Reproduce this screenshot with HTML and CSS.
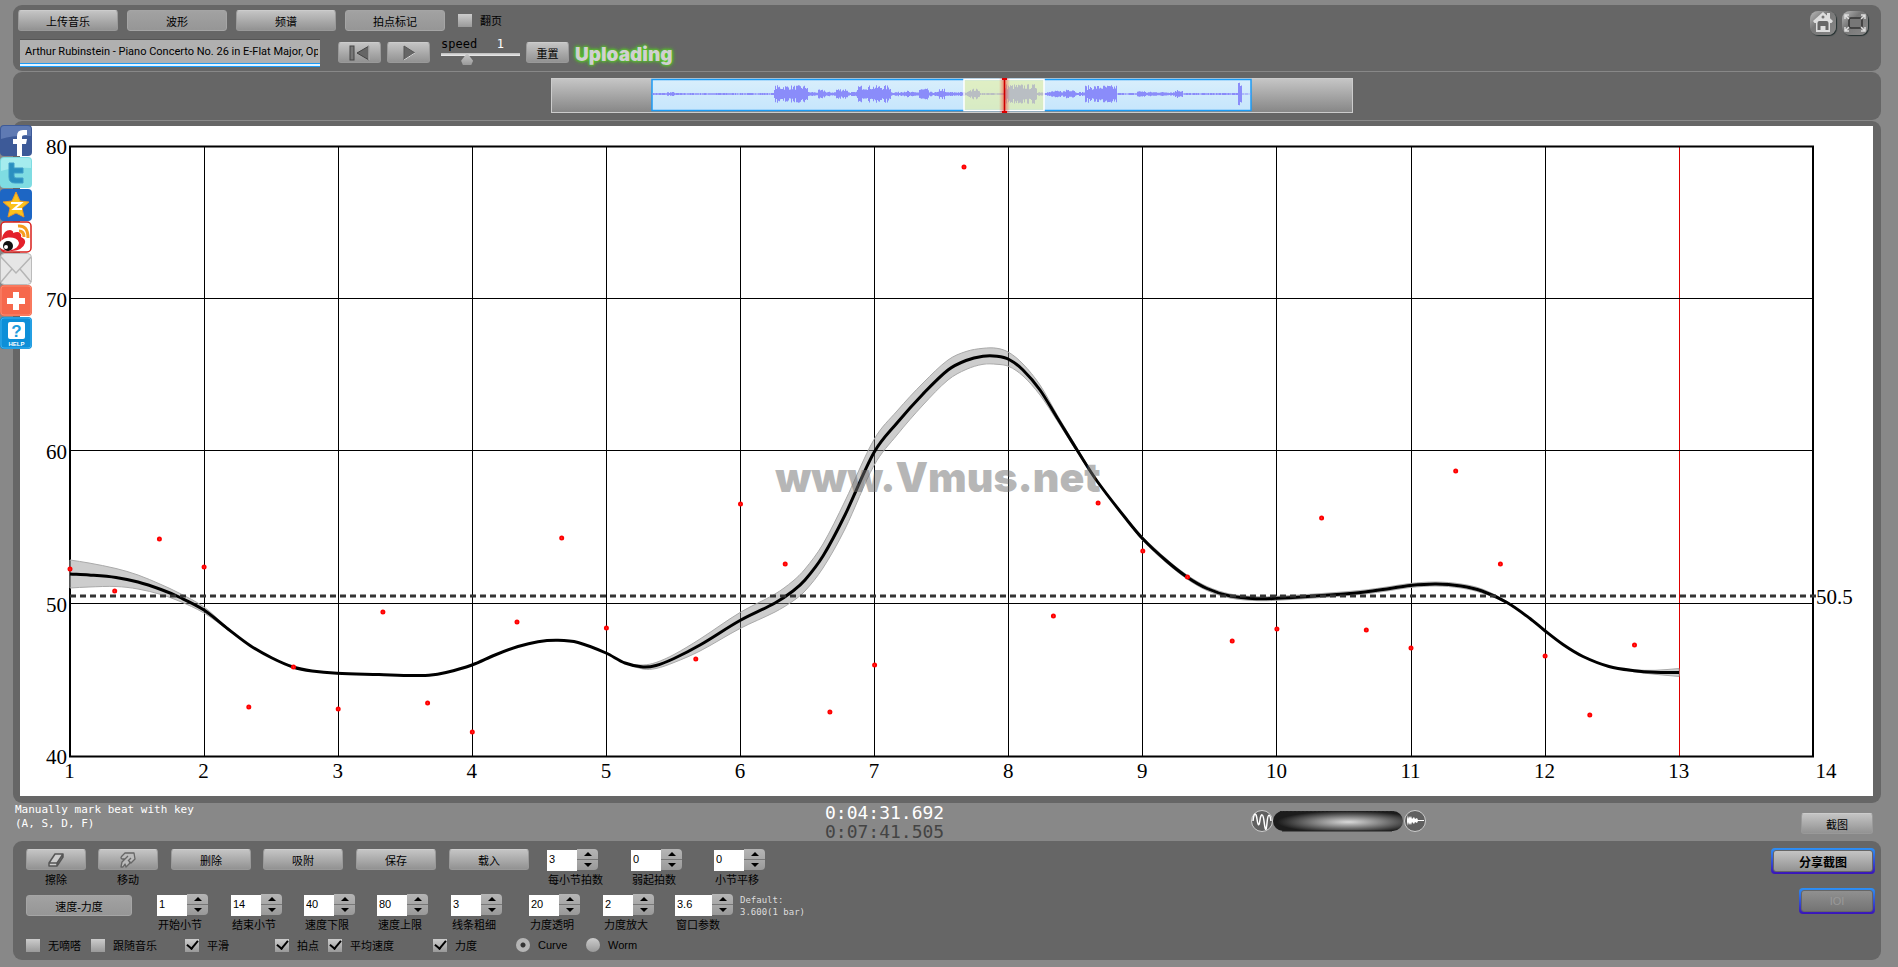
FILE: index.html
```
<!DOCTYPE html>
<html lang="zh">
<head>
    <meta charset="UTF-8">
    <meta name="viewport" content="width=device-width, initial-scale=1.0">
    <title>Vmus.net</title>
    <link rel="stylesheet" href="styles.css">
</head>
<body>
    <div class="app">
        <header class="panel toolbar">
            <div class="toolbar-main">
                <div class="toolbar-row">
                    <button class="btn btn-wide">上传音乐</button>
                    <button class="btn btn-wide pressed">波形</button>
                    <button class="btn btn-wide">频谱</button>
                    <button class="btn btn-wide pressed">拍点标记</button>
                    <label class="check page-turn"><input type="checkbox"><span>翻页</span></label>
                </div>
                <div class="toolbar-row">
                    <input class="track-name" type="text" aria-label="track" value="Arthur Rubinstein - Piano Concerto No. 26 in E-Flat Major, Op">
                    <div class="player">
                        <button class="btn btn-icon" aria-label="rewind">
                            <svg width="22" height="16" viewBox="0 0 22 16"><rect x="1" y="1" width="4" height="14" fill="#777" stroke="#444"/><path d="M20 1v14L8 8z" fill="#666" stroke="#444"/><path d="M20 1v14" stroke="#ddd"/></svg>
                        </button>
                        <button class="btn btn-icon" aria-label="play">
                            <svg width="16" height="16" viewBox="0 0 16 16"><path d="M3 1v14l11-7z" fill="#666" stroke="#555"/><path d="M3 15l11-7" stroke="#ddd"/></svg>
                        </button>
                        <div class="speed">
                            <div class="speed-text"><label for="speed">speed</label><output>1</output></div>
                            <input type="range" id="speed" min="0" max="3" step="0.1" value="0.9">
                        </div>
                        <button class="btn btn-reset">重置</button>
                        <span class="uploading">Uploading</span>
                    </div>
                </div>
            </div>
            <div class="window-buttons">
                <button class="round-btn" aria-label="home">
                    <svg width="26" height="24" viewBox="0 0 26 24"><path d="M13 1L3 10l1.500 2H6v9h14v-9h1.500L23 10l-3-2.700V2h-3v2.600z" fill="#ddd"/><path d="M7.500 19v-7q0-2 2-2h7q2 0 2 2v7h-3v-4h-5v4z" fill="#666"/><circle cx="13" cy="6" r="1.500" fill="#777"/></svg>
                </button>
                <button class="round-btn" aria-label="full screen">
                    <svg width="26" height="24" viewBox="0 0 26 24"><rect x="7" y="7" width="13" height="10" rx="2" fill="#777" stroke="#333" stroke-width="1.500"/><path d="M3 8V4h4M19 4h4v4M23 16v4h-4M7 20H3v-4M3 4l4 4M23 4l-4 4M23 20l-4-4M3 20l4-4" fill="none" stroke="#ddd" stroke-width="1.500"/></svg>
                </button>
            </div>
        </header>

        <section class="panel overview">
            <svg class="wave" viewBox="0 0 802 35">
                <defs>
                    <linearGradient id="waveBack" x1="0" y1="0" x2="0" y2="1"><stop offset="0" stop-color="#c6c6c6"/><stop offset="1" stop-color="#868686"/></linearGradient>
                    <linearGradient id="waveBlue" x1="0" y1="0" x2="0" y2="1"><stop offset="0" stop-color="#d8eefc"/><stop offset="1" stop-color="#c6e6fc"/></linearGradient>
                    <linearGradient id="cursorGlow"><stop offset="0" stop-color="#f00" stop-opacity="0"/><stop offset=".5" stop-color="#f00" stop-opacity=".45"/><stop offset="1" stop-color="#f00" stop-opacity="0"/></linearGradient>
                </defs>
                <rect x=".5" y=".5" width="801" height="34" fill="url(#waveBack)" stroke="#ccc"/>
                <rect x="101" y="1.500" width="599" height="31" fill="url(#waveBlue)" stroke="#1c9bf5" stroke-width="1.500"/>
                <path id="wavePath" fill="#8a8cfa"/>
                <rect x="413" y="1.500" width="80" height="31" fill="#e8f08c" fill-opacity=".5" stroke="#fff" stroke-width="1.500"/>
                <rect x="448" y="0" width="11" height="35" fill="url(#cursorGlow)"/>
                <path d="M453.500 0v35" stroke="#c00" stroke-width="1.500"/>
                <path d="M451 1h5M451 34h5" stroke="#d00" stroke-width="2"/>
            </svg>
        </section>

        <main class="panel chart-panel">
            <svg class="chart" viewBox="0 0 1853 670">
                <g id="grid"></g>
                <path id="band"/>
                <path id="curve"/>
                <path id="average" d="M50 470H1797"/>
                <g id="dots"></g>
                <g id="labels"></g>
                <text class="watermark" x="918" y="366">www.Vmus.net</text>
            </svg>
        </main>

        <div class="status">
            <p class="hint">Manually mark beat with key<br>(A, S, D, F)</p>
            <div class="time"><span>0:04:31.692</span><span class="total">0:07:41.505</span></div>
            <div class="status-right">
                <svg class="mixer" width="178" height="24" viewBox="0 0 178 24">
                    <defs>
                        <radialGradient id="knob" cx=".58" cy=".55" r=".55"><stop offset="0" stop-color="#dadada"/><stop offset=".45" stop-color="#868686"/><stop offset="1" stop-color="#1c1c1c"/></radialGradient>
                    </defs>
                    <circle cx="12" cy="12" r="10.500" fill="#606060" stroke="#ccc"/>
                    <path d="M3 12C4 3 6 3 7 10s2 8 3 1 3-7 4 1 2 13 3 2 3-9 4-2" fill="none" stroke="#fff" stroke-width="1.500"/>
                    <rect x="23" y="2" width="130" height="20" rx="10" fill="url(#knob)"/>
                    <path d="M30 2.500h115" stroke="#222" stroke-dasharray="2 2"/>
                    <path d="M32 22h110" stroke="#222"/>
                    <circle cx="165" cy="12" r="10.500" fill="#606060" stroke="#ccc"/>
                    <path d="M157 6l1 4 1-3 1 2 1-2 1 3 2-2 1 2 2-1 1 2h6v1h-6l-1 2-2-1-1 2-2-2-1 3-1-2-1 2-1-3-1 4z" fill="#fff"/>
                </svg>
                <button class="btn btn-shot">截图</button>
            </div>
        </div>

        <footer class="panel controls">
            <div class="control-rows">
                <div class="row row-edit">
                    <div class="tool">
                        <button class="btn" id="erase" aria-label="擦除"><svg width="18" height="16" viewBox="0 0 18 16"><path d="M2 11L8 2h8l-6 9zM2 11v3h8v-3M10 14l6-9V2" fill="#ccc" stroke="#555" stroke-width="1.500" stroke-linejoin="round"/></svg></button>
                        <label for="erase">擦除</label>
                    </div>
                    <div class="tool">
                        <button class="btn" id="move" aria-label="移动"><svg width="18" height="18" viewBox="0 0 18 18"><path d="M2 16l1-5 3-3H3Q1 7 3 5L6 2h9l1 6-4 4-2-2 1 2-4 4-1-3-2 3zM6 8l3-3M9 10l3-3" fill="#bbb" stroke="#666" stroke-width="1.300" stroke-linejoin="round"/></svg></button>
                        <label for="move">移动</label>
                    </div>
                    <button class="btn btn-edit">删除</button>
                    <button class="btn btn-edit">吸附</button>
                    <button class="btn btn-edit">保存</button>
                    <button class="btn btn-edit">载入</button>
                    <div class="step"><div class="spin"><input type="number" id="beats" value="3"><div class="arrows"><button aria-label="+"></button><button aria-label="-"></button></div></div><label for="beats">每小节拍数</label></div>
                    <div class="step"><div class="spin"><input type="number" id="pickup" value="0"><div class="arrows"><button aria-label="+"></button><button aria-label="-"></button></div></div><label for="pickup">弱起拍数</label></div>
                    <div class="step"><div class="spin"><input type="number" id="shift" value="0"><div class="arrows"><button aria-label="+"></button><button aria-label="-"></button></div></div><label for="shift">小节平移</label></div>
                </div>
                <div class="row row-view">
                    <button class="btn btn-mode pressed">速度-力度</button>
                    <div class="step"><div class="spin"><input type="number" id="barStart" value="1"><div class="arrows"><button aria-label="+"></button><button aria-label="-"></button></div></div><label for="barStart">开始小节</label></div>
                    <div class="step"><div class="spin"><input type="number" id="barEnd" value="14"><div class="arrows"><button aria-label="+"></button><button aria-label="-"></button></div></div><label for="barEnd">结束小节</label></div>
                    <div class="step"><div class="spin"><input type="number" id="tempoMin" value="40"><div class="arrows"><button aria-label="+"></button><button aria-label="-"></button></div></div><label for="tempoMin">速度下限</label></div>
                    <div class="step"><div class="spin"><input type="number" id="tempoMax" value="80"><div class="arrows"><button aria-label="+"></button><button aria-label="-"></button></div></div><label for="tempoMax">速度上限</label></div>
                    <div class="step"><div class="spin"><input type="number" id="lineWidth" value="3"><div class="arrows"><button aria-label="+"></button><button aria-label="-"></button></div></div><label for="lineWidth">线条粗细</label></div>
                    <div class="step"><div class="spin"><input type="number" id="alpha" value="20"><div class="arrows"><button aria-label="+"></button><button aria-label="-"></button></div></div><label for="alpha">力度透明</label></div>
                    <div class="step"><div class="spin"><input type="number" id="zoom" value="2"><div class="arrows"><button aria-label="+"></button><button aria-label="-"></button></div></div><label for="zoom">力度放大</label></div>
                    <div class="step step-long"><div class="spin"><input type="number" id="win" step="0.1" value="3.6"><div class="arrows"><button aria-label="+"></button><button aria-label="-"></button></div></div><label for="win">窗口参数</label></div>
                    <p class="default">Default:<br>3.600(1 bar)</p>
                </div>
                <div class="row row-options">
                    <label class="check"><input type="checkbox"><span>无嘀嗒</span></label>
                    <label class="check"><input type="checkbox"><span>跟随音乐</span></label>
                    <label class="check"><input type="checkbox" checked><span>平滑</span></label>
                    <label class="check"><input type="checkbox" checked><span>拍点</span></label>
                    <label class="check"><input type="checkbox" checked><span>平均速度</span></label>
                    <label class="check"><input type="checkbox" checked><span>力度</span></label>
                    <label class="check"><input type="radio" name="mode" checked><span>Curve</span></label>
                    <label class="check"><input type="radio" name="mode"><span>Worm</span></label>
                </div>
            </div>
            <div class="share-buttons">
                <div class="ring"><button class="btn btn-share">分享截图</button></div>
                <div class="ring"><button class="btn btn-small" disabled>IOI</button></div>
            </div>
        </footer>
    </div>

    <nav class="social">
        <a href="#" aria-label="Facebook"><svg viewBox="0 0 32 32"><rect width="32" height="31" rx="4" fill="#3d5a98"/><path d="M1 14V4q0-3 3-3h24q3 0 3 3v7Q15 10 1 14z" fill="#5f7ab3"/><path d="M17 31V19h-4v-5h4v-3q0-6 6-6h4v5h-2q-3 0-3 2v2h5l-1 5h-4v12z" fill="#fff"/></svg></a>
        <a href="#" aria-label="Twitter"><svg viewBox="0 0 32 32"><rect width="32" height="31" rx="4" fill="#7fdce2"/><path d="M1 14V4q0-3 3-3h24q3 0 3 3v7Q15 10 1 14z" fill="#a5ecee"/><path d="M9 6h5v5h9v5h-9v3q0 2 2 2h7v5h-8q-6 0-6-6z" fill="#2a8fc0" stroke="#3f9dc9"/></svg></a>
        <a href="#" aria-label="Qzone"><svg viewBox="0 0 32 32"><rect width="32" height="32" rx="4" fill="#1d66c4"/><path d="M16 3l4 9 9 1-7 6 2 9-8-4-8 4 2-9-7-6 9-1z" fill="#fbc21c" stroke="#e8962a"/><path d="M11 14h10l-7 6h8" fill="none" stroke="#fff" stroke-width="2"/></svg></a>
        <a href="#" aria-label="Weibo"><svg viewBox="0 0 32 32"><rect x="1" y="1" width="30" height="30" rx="4" fill="#fff" stroke="#d8201c" stroke-width="1.500"/><path d="M2 17Q4 9 10 9q4 1 3 3 5-2 7 0 2 2 1 4 5 2 4 6-2 7-13 8H2z" fill="#e4202a"/><ellipse cx="9" cy="23" rx="10" ry="6.500" fill="#fff" transform="rotate(-8 9 23)"/><circle cx="8" cy="25" r="5" fill="#111"/><circle cx="6" cy="26" r="2" fill="#fff"/><path d="M18 5q10-1 10 12M19 10q5 0 5 6" fill="none" stroke="#f59c1e" stroke-width="3"/></svg></a>
        <a href="#" aria-label="mail"><svg viewBox="0 0 32 32"><rect x=".5" y=".5" width="31" height="31" rx="4" fill="#e6e6e6" stroke="#bbb"/><path d="M1 4l15 16L31 4M1 29l11-13M31 29L20 16" fill="none" stroke="#b5b5b5" stroke-width="1.500"/></svg></a>
        <a href="#" aria-label="more"><svg viewBox="0 0 32 32"><rect width="32" height="31" rx="4" fill="#f6684c"/><rect x="1" y="1" width="30" height="29" rx="3" fill="none" stroke="#fa8a70"/><path d="M16 7v18M7 16h18" stroke="#fff" stroke-width="6"/></svg></a>
        <a href="#" aria-label="help"><svg viewBox="0 0 32 32"><rect width="32" height="32" rx="4" fill="#0d8fd8"/><rect x="1" y="1" width="30" height="30" rx="3" fill="none" stroke="#3db0ee"/><rect x="8" y="5" width="17" height="17" rx="2" fill="#fff"/><text x="16.500" y="20" class="help-mark">?</text><text x="16.500" y="29" class="help-text">HELP</text></svg></a>
    </nav>
    <script src="script.js"></script>
</body>
</html>
```
FILE: styles.css
```
* {
    box-sizing: border-box;
}
body {
    margin: 0;
    background-color: #888;
    color: #000;
    font-family: "Liberation Sans", "Noto Sans CJK SC", sans-serif;
    font-size: 11px;
}
p {
    margin: 0;
}
.app {
    padding: 5px 17px 0 13px;
}
.panel {
    background-color: #666;
    border-radius: 9px;
}

/* buttons */
.btn {
    height: 21px;
    padding: 0;
    display: flex;
    align-items: center;
    justify-content: center;
    border: 1px solid #999;
    border-top-color: #ccc;
    border-radius: 3px;
    background: linear-gradient(#c4c4c4, #929292);
    color: #000;
    font: 11px "Liberation Sans", "Noto Sans CJK SC", sans-serif;
}
.btn.pressed {
    background: linear-gradient(#a2a2a2, #969696);
    border-color: #a5a5a5;
}
.btn-wide {
    width: 100px;
}
.btn-icon,
.btn-reset {
    width: 43px;
}

/* toolbar */
.toolbar {
    height: 66px;
    display: flex;
    justify-content: space-between;
}
.toolbar-main {
    padding: 5px 0 0 5px;
}
.toolbar-row {
    display: flex;
    align-items: flex-start;
    gap: 9px;
}
.toolbar-row + .toolbar-row {
    margin-top: 4px;
}
.page-turn {
    margin: 3px 0 0 4px;
}
.track-name {
    width: 300px;
    height: 28px;
    margin: 4px 0 0 2px;
    padding: 0 2px 4px 5px;
    border: 0;
    border-top: 1px solid #555;
    border-bottom: 1px solid #1c9bf5;
    background: linear-gradient(#b0b0b0 23px, #1c9bf5 23px, #1c9bf5 24px, #e4f3ff 24px);
    font: 11px Roboto, sans-serif;
    outline: none;
}
.player {
    display: flex;
    align-items: flex-start;
    gap: 6px;
    padding: 7px 0 0 9px;
}
.speed {
    width: 79px;
    margin: -7px 0 0 5px;
}
.speed-text {
    display: flex;
    justify-content: space-between;
    padding-right: 16px;
    font: 12px/18px "DejaVu Sans Mono", monospace;
}
.speed-text output {
    color: #fff;
}
.speed input {
    display: block;
    appearance: none;
    width: 79px;
    height: 12px;
    margin: 0;
    background: linear-gradient(#bbb, #eee) 0 0 / 100% 3px no-repeat;
}
.speed input::-webkit-slider-thumb {
    appearance: none;
    width: 12px;
    height: 12px;
    background: linear-gradient(#ccc, #999);
    clip-path: polygon(50% 0, 100% 65%, 85% 100%, 15% 100%, 0 65%);
}
.uploading {
    color: #d0d0d0;
    font: 900 19px/26px Inter, sans-serif;
    text-shadow: 0 0 3px #5c2, 0 0 3px #5c2, 0 0 5px #5c2;
}
.window-buttons {
    display: flex;
    gap: 6px;
    padding: 6px 13px 0 0;
}
.round-btn {
    width: 26px;
    height: 24px;
    padding: 0;
    border: 0;
    border-radius: 8px;
    background: linear-gradient(135deg, #bbb, #777 40%, #888);
    box-shadow: 1px 1px 1px #243030;
}
.round-btn svg {
    display: block;
}

/* overview */
.overview {
    display: flex;
    justify-content: center;
    height: 48px;
    margin-top: 1px;
    padding-top: 6px;
}
.wave {
    width: 802px;
    height: 35px;
    margin-left: 10px;
}

/* chart */
.chart-panel {
    margin-top: 1px;
    padding: 5px 8px 7px 7px;
}
.chart {
    display: block;
    width: 100%;
    background-color: #fff;
    font: 21px "Liberation Serif", serif;
}
#grid {
    stroke: #000;
    fill: none;
}
#band {
    fill: #888;
    fill-opacity: .42;
    stroke: #aaa;
    stroke-width: 1;
}
#curve {
    fill: none;
    stroke: #000;
    stroke-width: 3;
}
#average {
    stroke: #333;
    stroke-width: 3;
    stroke-dasharray: 6 4;
}
#dots circle {
    fill: #f66;
    stroke: #f00;
    stroke-width: 2;
}
.watermark {
    font: 900 41px Inter, sans-serif;
    text-anchor: middle;
    fill: #6e6e6e;
    fill-opacity: .5;
}

/* status bar */
.status {
    display: grid;
    grid-template-columns: 1fr 122px 1fr;
    height: 38px;
    color: #fff;
    font-family: "DejaVu Sans Mono", monospace;
}
.hint {
    padding: 0 0 0 2px;
    font-size: 11px;
    line-height: 14px;
}
.time {
    display: flex;
    flex-direction: column;
    margin-left: -61px;
    font: 18px/19px "DejaVu Sans Mono", monospace;
    white-space: nowrap;
}
.total {
    color: #444;
}
.status-right {
    display: flex;
    justify-content: space-between;
    padding: 6px 8px 0 242px;
}
.btn-shot {
    width: 72px;
    margin-top: 4px;
}

/* controls */
.controls {
    display: flex;
    justify-content: space-between;
    padding: 7px 6px 0 13px;
    height: 119px;
}
.control-rows {
    padding-top: 1px;
}
.row {
    display: grid;
    align-items: start;
    justify-items: start;
}
.row-edit {
    grid-template-columns: 72px 73px 92px 93px 93px 98px 84px 83px 80px;
    height: 45px;
}
.row-view {
    grid-template-columns: 131px 74px 73px 73px 74px 78px 74px 72px 65px 90px;
    height: 44px;
}
.row-options {
    grid-template-columns: 65px 94px 90px 53px 105px 83px 70px 60px;
}
.tool {
    display: flex;
    flex-direction: column;
    align-items: center;
}
.tool .btn {
    width: 60px;
}
.tool label {
    line-height: 20px;
}
.btn-edit {
    width: 80px;
}
.btn-mode {
    width: 106px;
    margin-top: 1px;
}
.spin {
    display: flex;
}
.spin input {
    appearance: textfield;
    width: 30px;
    height: 21px;
    margin-top: 1px;
    padding: 0 0 4px 2px;
    border: 0;
    background-color: #fff;
    font: 11px "Liberation Sans", sans-serif;
    outline: none;
}
.spin input::-webkit-inner-spin-button {
    appearance: none;
    margin: 0;
}
.step-long .spin input {
    width: 37px;
}
.step label {
    display: block;
    padding-left: 1px;
    line-height: 18px;
}
.arrows {
    display: flex;
    flex-direction: column;
    width: 21px;
    height: 21px;
}
.arrows button {
    display: flex;
    align-items: center;
    justify-content: center;
    flex: 1;
    padding: 0;
    border: 0;
    border-radius: 0 4px 0 0;
    background: linear-gradient(#b5b5b5, #a8a8a8);
}
.arrows button + button {
    border-top: 1px solid #777;
    border-radius: 0 0 4px 0;
    background: linear-gradient(#a8a8a8, #999);
}
.arrows button::before {
    content: "";
    border: 4px solid transparent;
    border-top: 0;
    border-bottom-color: #000;
}
.arrows button + button::before {
    transform: rotate(180deg);
}
.default {
    color: #ddd;
    font: 9px/12px "DejaVu Sans Mono", monospace;
    white-space: nowrap;
}

/* tick boxes and radios */
.check {
    display: flex;
    align-items: center;
    gap: 8px;
    height: 14px;
    white-space: nowrap;
}
.check input {
    appearance: none;
    flex: none;
    width: 14px;
    height: 13px;
    margin: 0;
    background: linear-gradient(#ccc, #999);
}
.check input[type="checkbox"]:checked {
    display: flex;
    align-items: center;
    justify-content: center;
}
.check input[type="checkbox"]:checked::before {
    content: "";
    width: 5px;
    height: 9px;
    margin-bottom: 3px;
    border: solid #000;
    border-width: 0 2px 2px 0;
    transform: rotate(40deg);
}
.check input[type="radio"] {
    height: 14px;
    border-radius: 50%;
}
.check input[type="radio"]:checked {
    background: radial-gradient(#333 2px, #b5b5b5 3px);
}

.share-buttons {
    display: flex;
    flex-direction: column;
    align-items: flex-end;
    gap: 14px;
}
.ring {
    padding: 2px;
    border-radius: 4px;
    background: linear-gradient(#2c90f5, #3a14b8);
}
.ring .btn {
    height: 22px;
    border-color: #666;
}
.btn-share {
    width: 100px;
    font-weight: bold;
    font-size: 12px;
}
.btn-small {
    width: 72px;
}
.btn-small:disabled {
    background: linear-gradient(#909090, #747474);
    color: #999;
}

/* share links over the left edge */
.social {
    position: absolute;
    top: 125px;
    left: 0;
    width: 32px;
}
.social a,
.social svg {
    display: block;
    width: 32px;
    height: 32px;
}
.help-mark,
.help-text {
    fill: #1c9bdc;
    text-anchor: middle;
    font: bold 17px "Liberation Sans", sans-serif;
}
.help-text {
    fill: #fff;
    font-size: 6px;
}
```
FILE: script.js
```
const LEFT = 50, TOP = 20, BAR = 134.1, STEP = 152.5;

// grid and axis labels
let grid = '', labels = '';
for (let i = 1; i < 13; i++) {
    const colour = i === 12 ? '#d00' : '#000';
    grid += `<path d="M${Math.floor(LEFT + i * BAR) + 0.5} ${TOP}V630" stroke="${colour}"/>`;
}
for (let i = 1; i < 4; i++) {
    grid += `<path d="M${LEFT} ${Math.round(TOP + i * STEP) - 0.5}H1793"/>`;
}
grid += `<rect x="50" y="20.500" width="1743" height="610" stroke-width="2"/>`;
for (let i = 0; i < 14; i++) {
    const x = i === 13 ? 1806 : LEFT + i * BAR - 0.5;
    labels += `<text x="${x}" y="652" text-anchor="middle">${i + 1}</text>`;
}
for (let i = 0; i < 5; i++) {
    labels += `<text x="47" y="${28 + i * STEP}" text-anchor="end">${80 - i * 10}</text>`;
}
labels += '<text x="1796" y="478">50.5</text>';
document.getElementById('grid').innerHTML = grid;
document.getElementById('labels').innerHTML = labels;

// one dot per beat, three beats in a bar
const beats = [443, 465, 413, 441, 581, 541, 583, 486, 577, 606, 496, 412, 502, null, 533, 378, 438, 586, 539, null,
    41, null, 490, 377, 425, 451, 515, 503, 392, 504, 522, 345, 438, 530, 589, 519];
document.getElementById('dots').innerHTML = beats.map((y, i) =>
    y === null ? '' : `<circle cx="${(LEFT + i * BAR / 3).toFixed(1)}" cy="${y}" r="1.500"/>`).join('');

// tempo curve: x, y, half height of the grey band
const curve = [
    [50, 448, 14], [69, 449, 12], [96, 451.5, 9], [118, 456, 7], [141, 463.5, 5], [159, 471, 4], [184, 484, 3],
    [208, 503, 1], [230, 519.5, 0], [252, 532, 0], [273, 541, 0], [292, 545, 0], [317, 547.3, 0], [359, 548.5, 0],
    [393, 549.5, 0], [409, 549.3, 0], [426, 546.5, 0], [452, 539, 0], [475, 529, 0], [498, 520.5, 0], [518, 515.7, 0],
    [538, 514.3, 0], [558, 516.5, 0], [586, 527, 0], [605, 537, 0], [623, 541, 2], [636, 539.5, 3], [654, 532.5, 4],
    [680, 519, 6], [720, 494.5, 8], [755, 477, 9], [773, 465, 10], [785, 454, 11], [803, 430, 12], [825, 389, 14],
    [854, 326.5, 13], [877, 297, 12], [903, 268, 11], [928, 244, 10], [946, 234.5, 9], [963, 230.3, 8], [977, 230.3, 8],
    [989, 233.5, 7], [1003, 244, 6], [1020, 264, 5], [1037, 291.5, 3], [1058, 325.5, 2], [1077, 355, 1],
    [1107, 394, 1], [1123, 413, 2], [1146, 434.5, 2], [1167, 451, 2], [1187, 462.5, 2], [1210, 470, 2],
    [1238, 472.7, 2], [1257, 472.3, 2], [1309, 469, 2], [1345, 466, 2], [1370, 462.5, 2], [1390, 459.5, 2],
    [1416, 458, 2], [1441, 460, 2], [1462, 465, 2], [1487, 476.5, 1], [1510, 492.5, 0], [1524, 504, 0],
    [1543, 518.5, 0], [1563, 530.5, 0], [1589, 540.5, 0], [1614, 544.7, 1], [1635, 546.3, 2], [1659, 546.5, 4]
];

// slope at each point from its neighbours
function slope(p, i) {
    const a = p[i - 1] || p[i], b = p[i + 1] || p[i];
    return (b[1] - a[1]) / (b[0] - a[0]);
}

function smooth(p) {
    let d = '';
    for (let i = 0; i < p.length - 1; i++) {
        const b = p[i], c = p[i + 1], dx = (c[0] - b[0]) / 3;
        d += `C${b[0] + dx} ${b[1] + dx * slope(p, i)} ${c[0] - dx} ${c[1] - dx * slope(p, i + 1)} ${c[0]} ${c[1]}`;
    }
    return d;
}

const upper = curve.map(p => [p[0], p[1] - p[2]]);
const lower = curve.map(p => [p[0], p[1] + p[2]]).reverse();
document.getElementById('curve').setAttribute('d', `M${curve[0][0]} ${curve[0][1]}` + smooth(curve));
document.getElementById('band').setAttribute('d',
    `M${upper[0]}` + smooth(upper) + `L${lower[0]}` + smooth(lower) + 'Z');

// loudness envelope: x, height from there on
const envelope = [[101, 1], [116, 2], [124, 1], [223, 8], [257, 2], [267, 4], [275, 2], [285, 5], [297, 2], [306, 8],
    [340, 2], [350, 3], [358, 2], [368, 5], [378, 2], [388, 5], [394, 2], [417, 5], [429, 1], [453, 9], [486, 2],
    [500, 3], [515, 5], [524, 2], [534, 8], [566, 1], [586, 3], [594, 2], [604, 2], [624, 4], [632, 1], [687, 13], [691, 0.5]];
let wave = '', seed = 7;
for (let x = 101; x < 700; x++) {
    seed = (seed * 16807) % 2147483647;
    let h = 1;
    for (const e of envelope) if (x >= e[0]) h = e[1];
    h = h * (0.5 + 0.6 * seed / 2147483647);
    wave += `M${x} ${16 - h}h1v${2 * h}h-1z`;
}
document.getElementById('wavePath').setAttribute('d', wave);
```
